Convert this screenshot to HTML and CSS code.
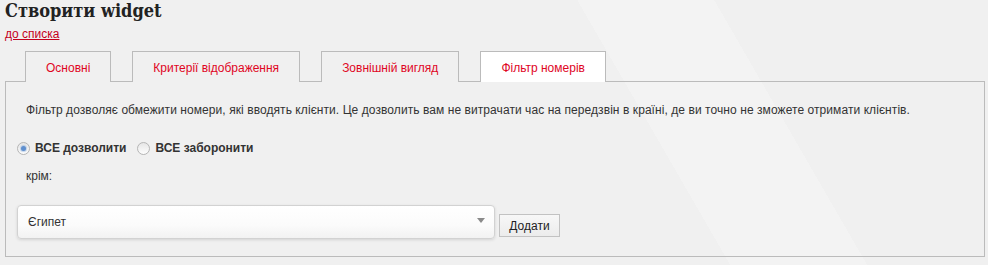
FILE: index.html
```html
<!DOCTYPE html>
<html lang="uk">
<head>
<meta charset="utf-8">
<title>Створити widget</title>
<link rel="stylesheet" href="styles.css">
</head>
<body>
<h1 class="title">Створити widget</h1>
<a class="back" href="#">до списка</a>
<div class="tabs">
  <a class="tab" href="#">Основні</a>
  <a class="tab" href="#">Критерії відображення</a>
  <a class="tab" href="#">Зовнішній вигляд</a>
  <a class="tab active" href="#">Фільтр номерів</a>
</div>
<div class="panel">
  <p class="desc">Фільтр дозволяє обмежити номери, які вводять клієнти. Це дозволить вам не витрачати час на передзвін в країні, де ви точно не зможете отримати клієнтів.</p>
  <div class="radios">
    <label class="radio"><span class="dot checked"></span>ВСЕ дозволити</label>
    <label class="radio"><span class="dot"></span>ВСЕ заборонити</label>
  </div>
  <div class="except">крім:</div>
  <div class="addrow">
    <div class="select"><span>Єгипет</span><span class="arrow"></span></div>
    <button class="btn" type="button">Додати</button>
  </div>
</div>
</body>
</html>
```
FILE: styles.css
```css
html, body {
  margin: 0;
  height: 100%;
}
body {
  padding: 0 3px 0 5px;
  background-color: #f0f0f0;
  background-image: linear-gradient(60deg, rgba(255,255,255,0) 64%, rgba(255,255,255,0.22) 64%, rgba(255,255,255,0.22) 76%, rgba(255,255,255,0) 76%);
  font-family: "Liberation Sans", Arial, sans-serif;
  font-size: 12px;
  color: #333;
}
.title {
  margin: 0;
  padding-top: 1px;
  font-family: "DejaVu Serif Condensed", "DejaVu Serif", serif;
  font-stretch: condensed;
  font-weight: bold;
  font-size: 18px;
  line-height: 20px;
  color: #222;
}
.back {
  display: inline-block;
  margin-top: 6px;
  color: #c4001c;
  font-size: 12px;
  line-height: 15px;
  text-decoration: underline;
}
.tabs {
  display: flex;
  gap: 21px;
  margin-top: 9px;
  padding-left: 20px;
  position: relative;
  z-index: 1;
}
.tab {
  display: block;
  height: 30px;
  line-height: 32px;
  padding: 0 20px;
  border: 1px solid #bbb;
  border-bottom: none;
  margin-bottom: -1px;
  background: #f0f0f0;
  color: #e0061f;
  text-decoration: none;
}
.tab.active {
  background: #fff;
}
.panel {
  border: 1px solid #bbb;
  padding: 19px 11px 17px;
}
.desc {
  margin: 0;
  padding-left: 9px;
  line-height: 18px;
  letter-spacing: 0.07px;
}
.radios {
  display: flex;
  gap: 11px;
  margin-top: 20px;
  line-height: 18px;
  font-weight: bold;
}
.radio {
  display: flex;
  align-items: center;
  gap: 5px;
}
.dot {
  box-sizing: border-box;
  width: 13px;
  height: 13px;
  border-radius: 50%;
  border: 1px solid #b5b5b5;
  background: linear-gradient(#e6e6e6, #fdfdfd);
  display: flex;
  align-items: center;
  justify-content: center;
}
.dot.checked::after {
  content: "";
  width: 5px;
  height: 5px;
  border-radius: 50%;
  background: #5f8fce;
  box-shadow: 0 0 1px 1px rgba(95,143,206,0.35);
}
.except {
  margin-top: 10px;
  padding-left: 9px;
  line-height: 18px;
}
.addrow {
  display: flex;
  align-items: flex-end;
  gap: 4px;
  margin-top: 20px;
}
.select {
  box-sizing: border-box;
  width: 478px;
  height: 34px;
  border: 1px solid #d2d2d2;
  border-radius: 4px;
  background: linear-gradient(#ffffff 0%, #fbfbfb 60%, #f2f2f2 100%);
  box-shadow: 0 1px 3px rgba(0,0,0,0.12);
  display: flex;
  align-items: center;
  justify-content: space-between;
  padding: 0 9px 0 10px;
  color: #333;
}
.arrow {
  width: 0;
  height: 0;
  border-left: 4px solid transparent;
  border-right: 4px solid transparent;
  border-top: 5px solid #8a8a8a;
  margin-top: -4px;
}
.btn {
  box-sizing: border-box;
  width: 61px;
  height: 23px;
  margin-bottom: 2px;
  border: 1px solid #c2c2c2;
  background: linear-gradient(#f7f7f7, #ececec);
  font-family: "Liberation Sans", Arial, sans-serif;
  font-size: 12px;
  color: #222;
  padding: 0;
}
```
